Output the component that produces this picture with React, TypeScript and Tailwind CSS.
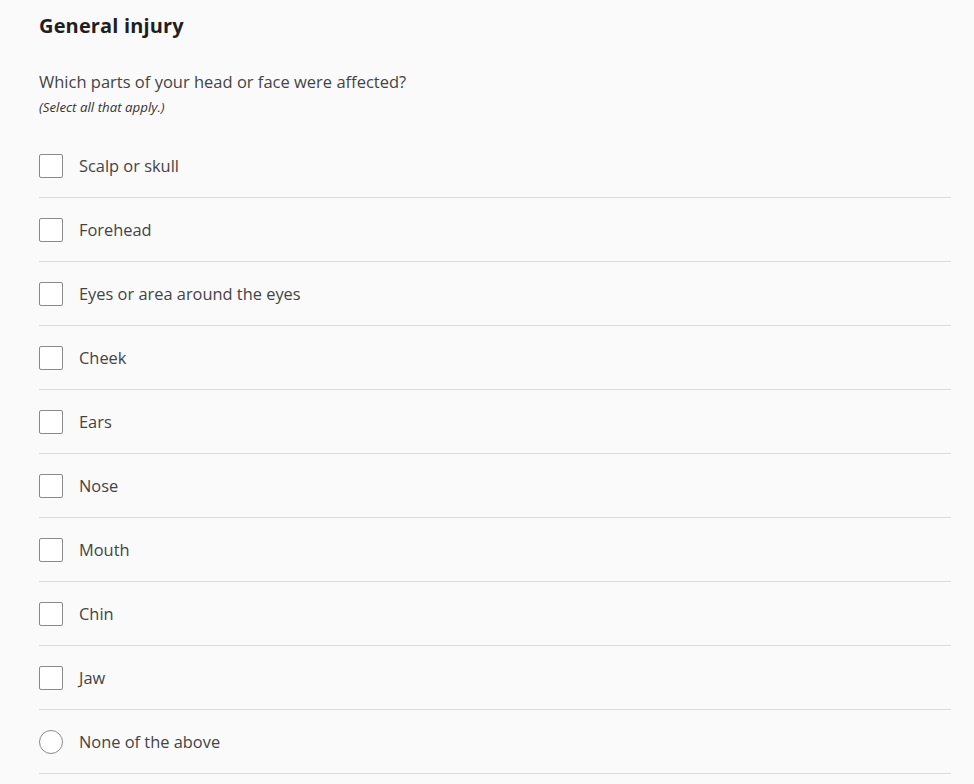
import React from "react";

const items = [
  "Scalp or skull",
  "Forehead",
  "Eyes or area around the eyes",
  "Cheek",
  "Ears",
  "Nose",
  "Mouth",
  "Chin",
  "Jaw",
];

export default function App() {
  return (
    <div
      className="min-h-[784px] bg-[#fafafa] pl-[39px] pr-[23px] pt-[12px]"
      style={{ fontFamily: '"Open Sans", "Liberation Sans", sans-serif' }}
    >
      <h1 className="text-[20px] leading-[28px] font-bold tracking-[0.15px] text-[#1f1f1f]">General injury</h1>
      <p className="mt-[30px] text-[16.5px] leading-[24px] text-[#444]">
        Which parts of your head or face were affected?
      </p>
      <p className="mt-[5px] text-[13.3px] leading-[16px] italic text-[#333]">(Select all that apply.)</p>
      <div className="mt-[19px] flex flex-col">
        {items.map((t) => (
          <label key={t} className="flex h-[64px] items-center border-b border-[#dcdcdc]">
            <span className="h-[24px] w-[24px] shrink-0 rounded-[2px] border border-[#8a8a8a] bg-white" />
            <span className="ml-[16px] mt-[2px] text-[16.4px] text-[#444]">{t}</span>
          </label>
        ))}
        <label className="flex h-[64px] items-center border-b border-[#dcdcdc]">
          <span className="h-[24px] w-[24px] shrink-0 rounded-full border border-[#8a8a8a] bg-white" />
          <span className="ml-[16px] mt-[2px] text-[16.4px] text-[#444]">None of the above</span>
        </label>
      </div>
    </div>
  );
}
